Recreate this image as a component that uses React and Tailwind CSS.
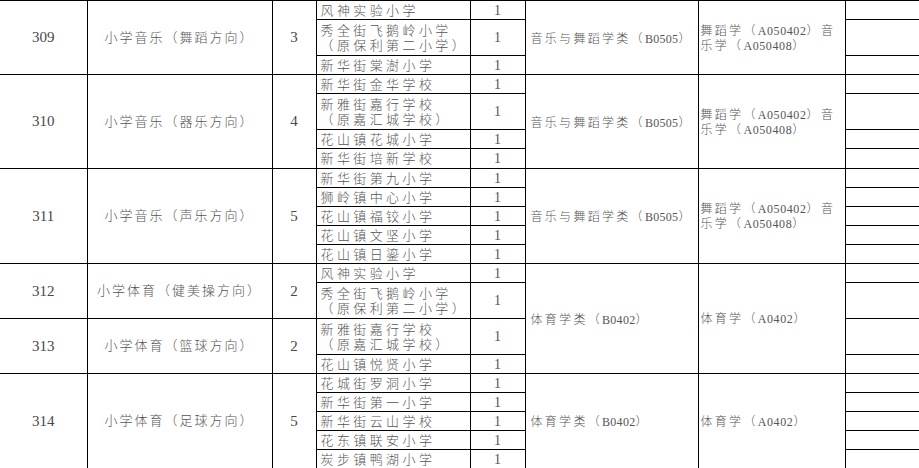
const groups = [
  {
    id: '309', name: '小学音乐（舞蹈方向）', count: 3,
    major: '音乐与舞蹈学类（B0505）', majorSpan: 3,
    major2: ['舞蹈学（A050402）音', '乐学（A050408）'],
    schools: [
      { lines: ['风神实验小学'], h: 19 },
      { lines: ['秀全街飞鹅岭小学', '（原保利第二小学）'], h: 36 },
      { lines: ['新华街棠澍小学'], h: 19 },
    ],
  },
  {
    id: '310', name: '小学音乐（器乐方向）', count: 4,
    major: '音乐与舞蹈学类（B0505）', majorSpan: 4,
    major2: ['舞蹈学（A050402）音', '乐学（A050408）'],
    schools: [
      { lines: ['新华街金华学校'], h: 19 },
      { lines: ['新雅街嘉行学校', '（原嘉汇城学校）'], h: 36 },
      { lines: ['花山镇花城小学'], h: 19 },
      { lines: ['新华街培新学校'], h: 20 },
    ],
  },
  {
    id: '311', name: '小学音乐（声乐方向）', count: 5,
    major: '音乐与舞蹈学类（B0505）', majorSpan: 5,
    major2: ['舞蹈学（A050402）音', '乐学（A050408）'],
    schools: [
      { lines: ['新华街第九小学'], h: 19 },
      { lines: ['狮岭镇中心小学'], h: 19 },
      { lines: ['花山镇福铰小学'], h: 19 },
      { lines: ['花山镇文坚小学'], h: 19 },
      { lines: ['花山镇日鎏小学'], h: 19 },
    ],
  },
  {
    id: '312', name: '小学体育（健美操方向）', count: 2,
    major: '体育学类（B0402）', majorSpan: 4,
    major2: ['体育学（A0402）'],
    schools: [
      { lines: ['风神实验小学'], h: 19 },
      { lines: ['秀全街飞鹅岭小学', '（原保利第二小学）'], h: 36 },
    ],
  },
  {
    id: '313', name: '小学体育（篮球方向）', count: 2,
    major: null,
    schools: [
      { lines: ['新雅街嘉行学校', '（原嘉汇城学校）'], h: 36 },
      { lines: ['花山镇悦贤小学'], h: 19 },
    ],
  },
  {
    id: '314', name: '小学体育（足球方向）', count: 5,
    major: '体育学类（B0402）', majorSpan: 5,
    major2: ['体育学（A0402）'],
    schools: [
      { lines: ['花城街罗洞小学'], h: 19 },
      { lines: ['新华街第一小学'], h: 19 },
      { lines: ['新华街云山学校'], h: 19 },
      { lines: ['花东镇联安小学'], h: 19 },
      { lines: ['炭步镇鸭湖小学'], h: 19 },
    ],
  },
];

const rowHeight = {
  19: 'h-[19px]',
  20: 'h-[20px]',
  36: 'h-[36px]',
};

// CJK gets wide letter spacing, latin runs only a little (like the Song-type original)
function Spaced({ text, gap, latin = '' }) {
  return text.split(/([A-Za-z0-9]+)/).map((part, i) =>
    /^[A-Za-z0-9]+$/.test(part)
      ? <span key={i} className={latin}>{part}</span>
      : <span key={i} className={gap}>{part}</span>
  );
}

const cell = 'border border-black p-0 align-middle';

export default function App() {
  return (
    <div className="w-[919px] h-[468px] overflow-hidden bg-white font-['Liberation_Serif','Noto_Sans_CJK_SC',serif] text-[#555]">
      <table className="table-fixed border-collapse w-[919px]">
        <colgroup>
          <col className="w-[87px]" />
          <col className="w-[185px]" />
          <col className="w-[44px]" />
          <col className="w-[154px]" />
          <col className="w-[55px]" />
          <col className="w-[173px]" />
          <col className="w-[147px]" />
          <col className="w-[74px]" />
        </colgroup>
        <tbody>
          {groups.map((g) =>
            g.schools.map((s, i) => (
              <tr key={g.id + i} className={rowHeight[s.h]}>
                {i === 0 && (
                  <>
                    <td rowSpan={g.schools.length} className={`${cell} border-l-0 text-center text-[15px] text-[#484848]`}>
                      {g.id}
                    </td>
                    <td rowSpan={g.schools.length} className={`${cell} text-center text-[13px] font-light`}>
                      <Spaced text={g.name} gap="tracking-[2px]" />
                    </td>
                    <td rowSpan={g.schools.length} className={`${cell} text-center text-[15px] text-[#484848]`}>
                      {g.count}
                    </td>
                  </>
                )}
                <td className={`${cell} pl-[4px] text-[13px] leading-[15px] font-light tracking-[3.4px] whitespace-nowrap`}>
                  {s.lines.map((l, k) => (
                    <div key={k}>{l}</div>
                  ))}
                </td>
                <td className={`${cell} text-center text-[14px] leading-[15px]`}>1</td>
                {i === 0 && g.major && (
                  <>
                    <td rowSpan={g.majorSpan} className={`${cell} pl-[5px] pt-[2px] text-[12px] font-light whitespace-nowrap`}>
                      <Spaced text={g.major} gap="tracking-[2.3px]" latin="tracking-[0.3px]" />
                    </td>
                    <td rowSpan={g.majorSpan} className={`${cell} pl-[2px] pt-[2px] text-[12px] leading-[15px] font-light whitespace-nowrap`}>
                      {g.major2.map((l, k) => (
                        <div key={k}>
                          <Spaced text={l} gap="tracking-[2.3px]" latin="tracking-[0.6px]" />
                        </div>
                      ))}
                    </td>
                  </>
                )}
                <td className={cell} />
              </tr>
            ))
          )}
        </tbody>
      </table>
    </div>
  );
}
